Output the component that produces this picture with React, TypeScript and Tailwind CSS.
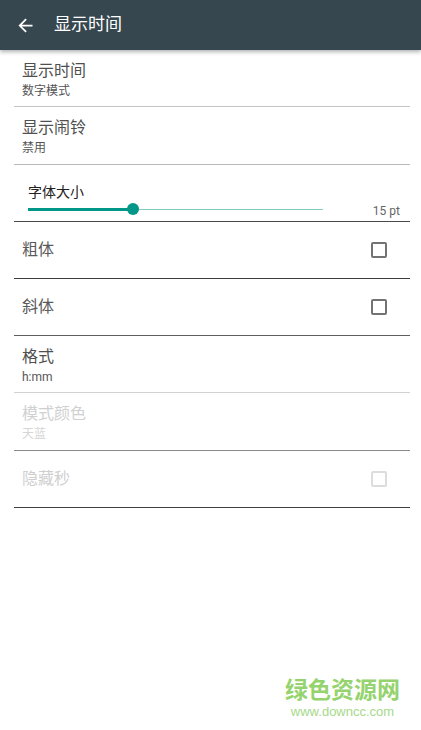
import { FC } from 'react'

const font = { fontFamily: '"Roboto", "Noto Sans CJK SC", sans-serif' }

interface RowProps {
  title: string
  summary?: string
  disabled?: boolean
  checkbox?: boolean
  height: string
  line: string
}

const Checkbox: FC<{ disabled?: boolean }> = ({ disabled }) => (
  <span
    className={
      disabled
        ? 'block w-[16px] h-[16px] border-2 border-[#dcdcdc] rounded-[2px]'
        : 'block w-[16px] h-[16px] border-2 border-[#737373] rounded-[2px]'
    }
  />
)

const Row: FC<RowProps> = ({ title, summary, disabled, checkbox, height, line }) => {
  if (checkbox) {
    return (
      <div className={`flex items-center justify-between pl-[8px] pr-[23px] border-b ${height} ${line}`}>
        <span className={disabled ? 'text-[16px] leading-[20px] text-[#cfcfcf]' : 'text-[16px] leading-[20px] text-[#5a5a5a]'}>
          {title}
        </span>
        <Checkbox disabled={disabled} />
      </div>
    )
  }
  return (
    <div className={`flex flex-col pl-[8px] pt-[11px] border-b ${height} ${line}`}>
      <span className={disabled ? 'text-[16px] leading-[20px] text-[#d0d0d0]' : 'text-[16px] leading-[20px] text-[#4f4f4f]'}>
        {title}
      </span>
      {summary && (
        <span className={disabled ? 'text-[12px] leading-[16px] mt-[2px] text-[#d6d6d6]' : 'text-[12px] leading-[16px] mt-[2px] text-[#555555]'}>
          {summary}
        </span>
      )}
    </div>
  )
}

export default function App() {
  const value = 35.6

  return (
    <div className="relative w-[421px] h-[730px] bg-white overflow-hidden" style={font}>
      <header className="relative z-10 flex items-center h-[50px] bg-[#37474f] shadow-[0_2px_4px_rgba(0,0,0,0.3)]">
        <svg className="ml-[15px]" width="21" height="21" viewBox="0 0 24 24" fill="#ffffff">
          <path d="M20 11H7.83l5.59-5.59L12 4l-8 8 8 8 1.41-1.41L7.83 13H20v-2z" />
        </svg>
        <span className="ml-[18px] text-[17px] text-white">显示时间</span>
      </header>

      <div className="mx-[14px] w-[396px]">
        <Row title="显示时间" summary="数字模式" height="h-[57px]" line="border-[#c4c4c4]" />
        <Row title="显示闹铃" summary="禁用" height="h-[58px]" line="border-[#b8b8b8]" />

        <div className="flex flex-col h-[57px] pt-[17px] pl-[14px] pr-[10px] border-b border-[#4a4a4a]">
          <span className="text-[14px] leading-[20px] text-[#222222]">字体大小</span>
          <div className="flex items-center justify-between -mt-[2px]">
            <div className="relative w-[295px] h-[14px] flex items-center">
              <div className="absolute left-0 right-0 h-[1px] bg-[#80cbc4]" />
              <div className="absolute left-0 h-[3px] bg-[#009688]" style={{ width: `${value}%` }} />
              <div
                className="absolute w-[12px] h-[12px] -ml-[6px] rounded-full bg-[#009688]"
                style={{ left: `${value}%` }}
              />
            </div>
            <span className="text-[12px] leading-[14px] mt-[4px] text-[#666666]">15 pt</span>
          </div>
        </div>

        <Row title="粗体" checkbox height="h-[57px]" line="border-[#3c3c3c]" />
        <Row title="斜体" checkbox height="h-[57px]" line="border-[#5e5e5e]" />
        <Row title="格式" summary="h:mm" height="h-[57px]" line="border-[#d2d2d2]" />
        <Row title="模式颜色" summary="天蓝" disabled height="h-[58px]" line="border-[#8a8a8a]" />
        <Row title="隐藏秒" checkbox disabled height="h-[57px]" line="border-[#404040]" />
      </div>

      <div className="absolute right-[21px] bottom-[10px] flex flex-col items-center">
        <span className="text-[23px] leading-[26px] font-bold text-[#95d36e]">绿色资源网</span>
        <span className="text-[13px] leading-[16px] text-[#a6d98a]" style={{ fontFamily: '"Liberation Sans", sans-serif' }}>
          www.downcc.com
        </span>
      </div>
    </div>
  )
}
